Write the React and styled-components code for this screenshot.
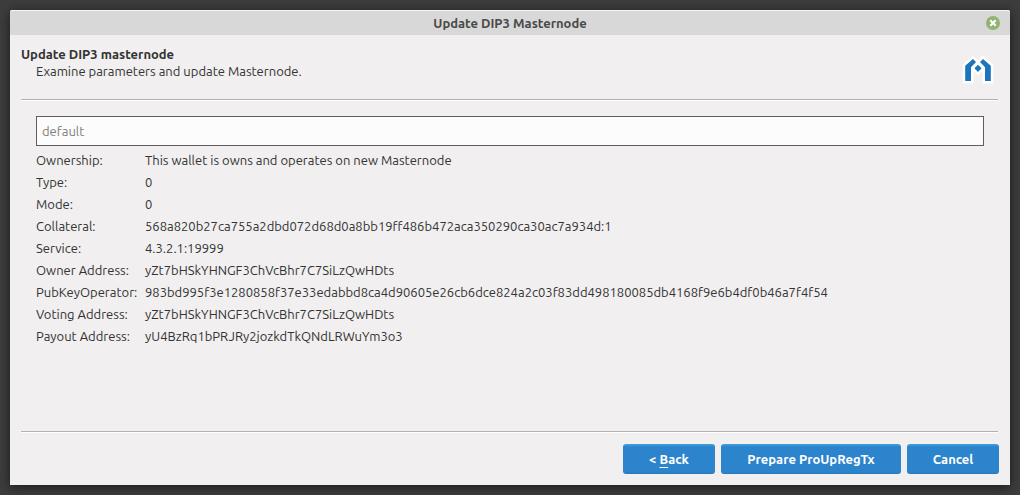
import React from 'react';
import styled, { createGlobalStyle } from 'styled-components';

const GlobalStyle = createGlobalStyle`
    * {
        box-sizing: border-box;
    }
    body {
        margin: 0;
        background: #3a3a3a;
        color: #333333;
        font-family: Ubuntu, "Noto Sans", sans-serif;
        font-size: 13px;
        line-height: 17px;
    }
`;

const Desktop = styled.div`
    display: flex;
    min-height: 100vh;
    padding: 10px;
    background: #3d3d3d;
`;

const Window = styled.div`
    flex: 1;
    min-width: 0;
    display: flex;
    flex-direction: column;
    border-radius: 2px 2px 0 0;
    background: #f1eff0;
    box-shadow: 0 2px 12px rgba(0, 0, 0, 0.6);
`;

const TitleBar = styled.header`
    display: grid;
    grid-template-columns: 1fr auto 1fr;
    align-items: center;
    height: 25px;
    padding: 0 10px;
    border-top: 1px solid #f4f4f4;
    border-radius: 2px 2px 0 0;
    background: #d8d8d8;
`;

const WindowTitle = styled.span`
    grid-column: 2;
    color: #4a4a4a;
    font-weight: 600;
`;

const CloseButton = styled.button`
    justify-self: end;
    display: block;
    width: 14px;
    height: 14px;
    padding: 0;
    border: none;
    background: none;

    svg {
        display: block;
    }
`;

const PageHeader = styled.div`
    display: flex;
    justify-content: space-between;
    padding: 11px 16px 0 11px;
    height: 64px;
`;

// sunken line: grey on top, white below
const Divider = styled.hr`
    height: 2px;
    margin: 0 12px 0 11px;
    border: none;
    border-top: 1px solid #b3b1b2;
    background: #ffffff;
`;

const PageTitle = styled.h1`
    margin: 0;
    font-size: 13px;
    font-weight: 700;
    line-height: 17px;
`;

const PageSubtitle = styled.p`
    margin: 0 0 0 15px;
`;

const Logo = styled.svg`
    width: 32px;
    height: 32px;
    margin-top: 8px;
`;

const Content = styled.main`
    flex: 1;
    padding: 15px 26px;
`;

const WalletInput = styled.input`
    display: block;
    width: 100%;
    height: 30px;
    padding: 0 5px;
    border: 1px solid #5f5d5e;
    border-radius: 0;
    background: #fcfcfc;
    color: #808080;
    font: inherit;
`;

const Details = styled.dl`
    display: grid;
    grid-template-columns: 102px 1fr;
    column-gap: 7px;
    margin: 3px 0 0;
    line-height: 22px;
`;

const Label = styled.dt`
    white-space: nowrap;
`;

const Value = styled.dd`
    margin: 0;
    overflow-wrap: anywhere;
`;

const Footer = styled.footer`
    display: flex;
    justify-content: flex-end;
    gap: 6px;
    padding: 11px;
`;

const Button = styled.button`
    min-width: ${(props) => (props.$wide ? '180px' : '92px')};
    height: 30px;
    padding: 0 12px;
    border: none;
    border-radius: 3px;
    background: linear-gradient(#45a0e0, #2c84cc 3px, #2c84cc 28px, #2876b6);
    color: #ffffff;
    font: inherit;
    font-weight: 700;
`;

const Mnemonic = styled.span`
    text-decoration: underline;
    text-decoration-thickness: 1px;
    text-underline-offset: 3px;
`;

const details = [
    { label: 'Ownership:', value: 'This wallet is owns and operates on new Masternode' },
    { label: 'Type:', value: '0' },
    { label: 'Mode:', value: '0' },
    { label: 'Collateral:', value: '568a820b27ca755a2dbd072d68d0a8bb19ff486b472aca350290ca30ac7a934d:1' },
    { label: 'Service:', value: '4.3.2.1:19999' },
    { label: 'Owner Address:', value: 'yZt7bHSkYHNGF3ChVcBhr7C7SiLzQwHDts' },
    { label: 'PubKeyOperator:', value: '983bd995f3e1280858f37e33edabbd8ca4d90605e26cb6dce824a2c03f83dd498180085db4168f9e6b4df0b46a7f4f54' },
    { label: 'Voting Address:', value: 'yZt7bHSkYHNGF3ChVcBhr7C7SiLzQwHDts' },
    { label: 'Payout Address:', value: 'yU4BzRq1bPRJRy2jozkdTkQNdLRWuYm3o3' },
];

// the blue shapes sit on a thick white outline of themselves
const MasternodeLogo = () => {
    const shapes = 'M3.2 27V11.8L11 5L14 8L9 13.2V27ZM28.8 27V11.8L21 5L18 8L23 13.2V27ZM16 10.7L19.6 14.3L16 17.9L12.4 14.3Z';

    return (
        <Logo viewBox="0 0 32 32" aria-hidden="true">
            <path d={shapes} fill="#ffffff" stroke="#ffffff" strokeWidth="5" />
            <path d={shapes} fill="#1c75bc" />
        </Logo>
    );
};

const App = () => (
    <Desktop>
        <GlobalStyle />
        <Window>
            <TitleBar>
                <WindowTitle>Update DIP3 Masternode</WindowTitle>
                <CloseButton type="button" aria-label="Close">
                    <svg width="14" height="14" viewBox="0 0 14 14">
                        <circle cx="7" cy="7" r="7" fill="#92b372" />
                        <path d="M4.3 4.3L9.7 9.7M9.7 4.3L4.3 9.7" stroke="#ffffff" strokeWidth="2" />
                    </svg>
                </CloseButton>
            </TitleBar>

            <PageHeader>
                <div>
                    <PageTitle>Update DIP3 masternode</PageTitle>
                    <PageSubtitle>Examine parameters and update Masternode.</PageSubtitle>
                </div>
                <MasternodeLogo />
            </PageHeader>
            <Divider />

            <Content>
                <WalletInput type="text" aria-label="Wallet" defaultValue="default" disabled />
                <Details>
                    {details.map(({ label, value }) => (
                        <React.Fragment key={label}>
                            <Label>{label}</Label>
                            <Value>{value}</Value>
                        </React.Fragment>
                    ))}
                </Details>
            </Content>

            <Divider />
            <Footer>
                <Button type="button">&lt; <Mnemonic>B</Mnemonic>ack</Button>
                <Button type="button" $wide>Prepare ProUpRegTx</Button>
                <Button type="button">Cancel</Button>
            </Footer>
        </Window>
    </Desktop>
);

export default App;
